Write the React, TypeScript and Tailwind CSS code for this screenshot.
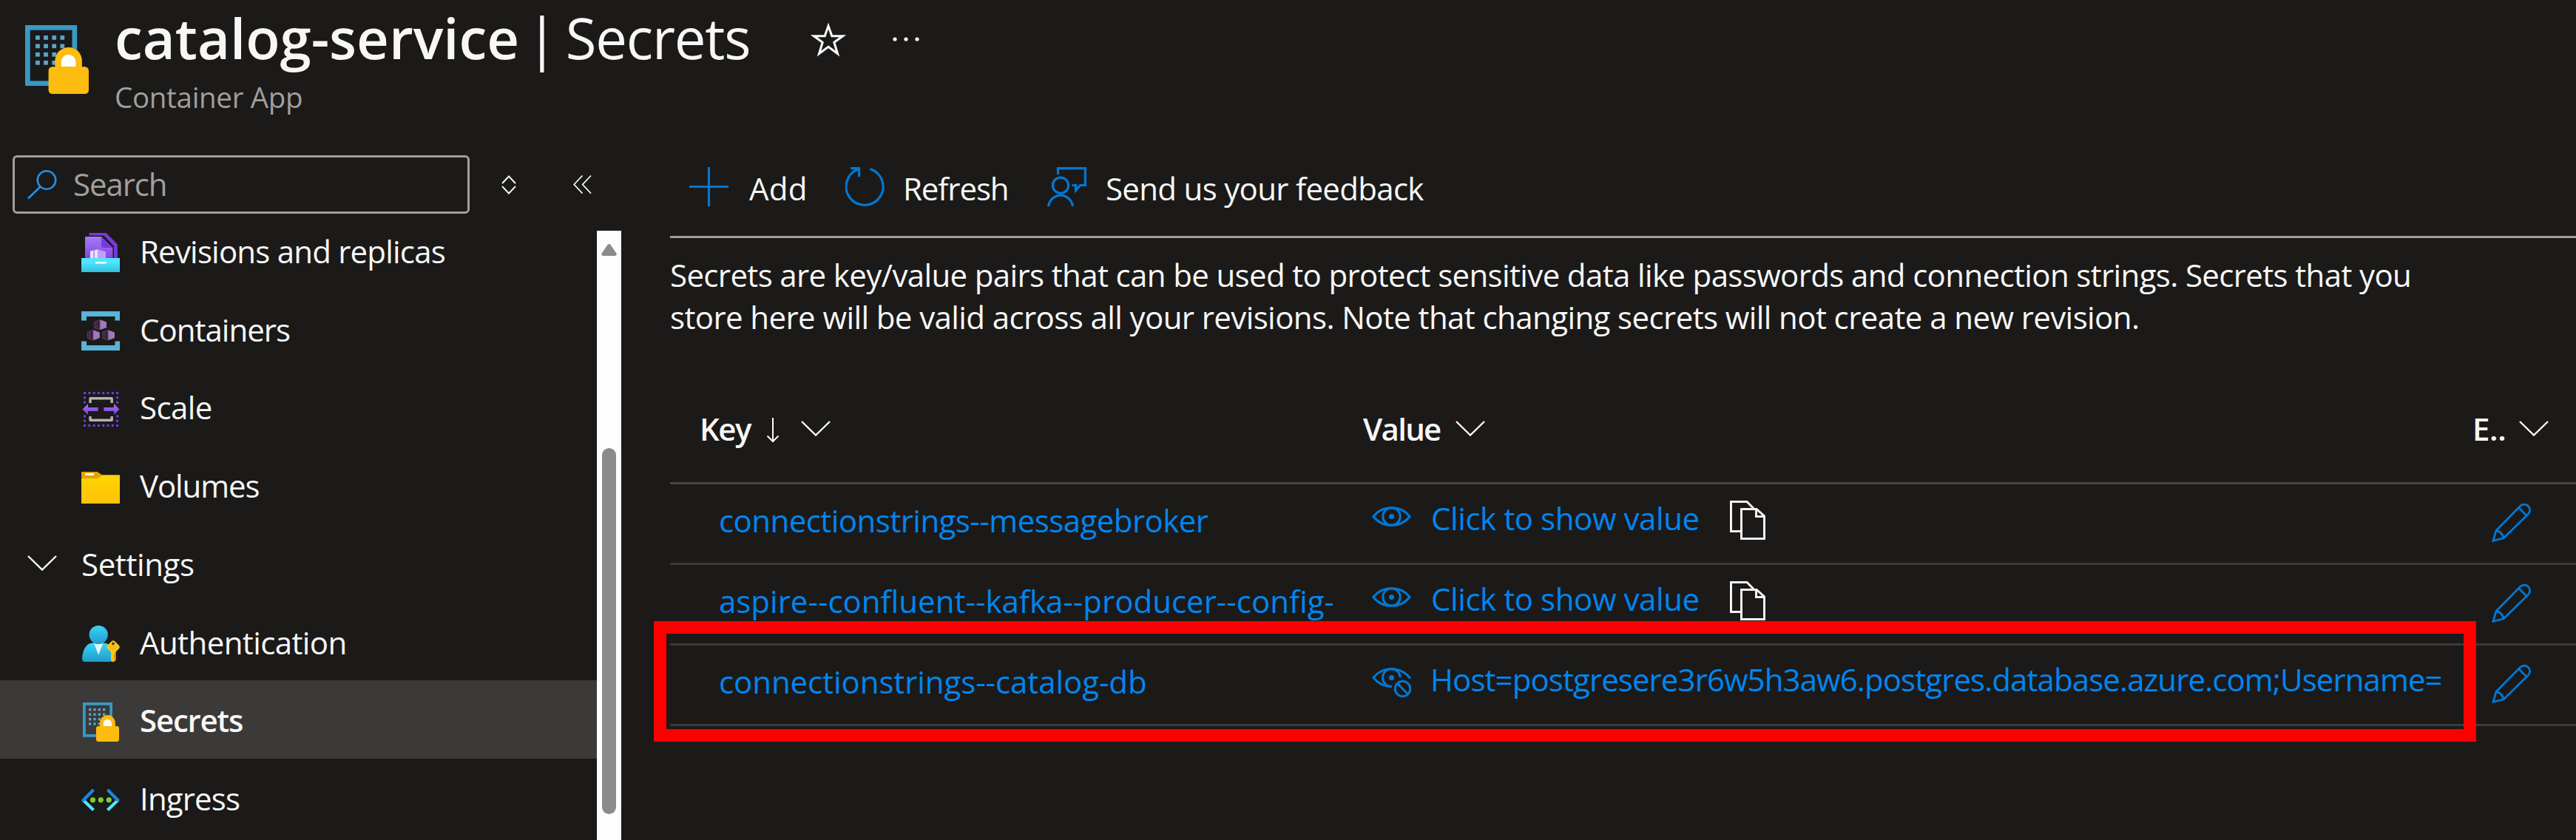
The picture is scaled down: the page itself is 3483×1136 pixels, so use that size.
import type { ReactNode } from "react";

const BLUE = "#0078d4";

function SecretsIcon({ className }: { className: string }) {
  const cols = [119, 125.3, 131.7, 138];
  const rows = [956.5, 963, 969.5, 975.8];
  return (
    <svg viewBox="112 950 49 53" className={className}>
      <rect x="113.9" y="951.9" width="36.2" height="43" fill="none" stroke="#3999c6" strokeWidth="3.8" />
      {rows.map((y) => cols.map((x) => <rect key={`${x}-${y}`} x={x + 1} y={y + 1.5} width="3.3" height="3.3" fill="#5ba3c8" />))}
      <path d="M135 984v-6.500a10.400 10.400 0 0 1 20.800 0v6.500z" fill="#fcbc10" />
      <path d="M139.800 982v-3.500a5.600 5.800 0 0 1 11.200 0v3.500z" fill="#fff" />
      <rect x="130" y="982" width="31" height="21" rx="3" fill="#fcbc10" />
    </svg>
  );
}

function RevisionsIcon() {
  return (
    <svg viewBox="0 0 52 53" className="h-[53px] w-[52px]">
      <defs>
        <linearGradient id="doc" x1="0" y1="0" x2="0" y2="1">
          <stop offset="0" stopColor="#a67af4" />
          <stop offset="1" stopColor="#8348e4" />
        </linearGradient>
        <linearGradient id="tray" x1="0" y1="0" x2="0" y2="1">
          <stop offset="0.3" stopColor="#50e6ff" />
          <stop offset="1" stopColor="#32bedd" />
        </linearGradient>
      </defs>
      <path d="M10.500 0H33.500L48.800 15.500V34H44V18L30.500 3.500H10.500Z" fill="#773adc" />
      <path d="M5 5H27L42.500 20V34H5Z" fill="url(#doc)" />
      <path d="M27 5L42.500 20H30.500Q27 20 27 17Z" fill="#773adc" />
      <path d="M22 22L33 25.500V34H22Z" fill="#bf9ff6" />
      <path d="M12 24.500L16.500 23.500V34H12ZM17.500 23.200L22 22.200V34H17.500Z" fill="#e9e2f6" />
      <rect y="34" width="52" height="19" fill="url(#tray)" />
      <rect x="19" y="39" width="15" height="2.600" rx="0.500" fill="#fff" />
    </svg>
  );
}

function Crate({ x, y }: { x: number; y: number }) {
  return (
    <g transform={`translate(${x} ${y})`}>
      <path d="M8.300 0L17 3.200V10.800L8.300 14Z" fill="#a078b8" />
      <path d="M7.300 0.500V13.500M4.600 1.500V12.500L0.700 11V3L4.600 1.800M2.700 2.800V11.500M4.600 1.500L7.300 0.600M4.600 12.500L7.300 13.400" fill="none" stroke="#693a7c" strokeWidth="1" />
    </g>
  );
}

function ContainersIcon() {
  return (
    <svg viewBox="0 0 52 53" className="h-[53px] w-[52px]">
      <path d="M0 0H52V12.500H45.500V7H7V12.500H0ZM0 40.500H7V46H45.500V40.500H52V53H0Z" fill="#59b4d9" />
      <Crate x={17} y={11.300} />
      <Crate x={7.800} y={25.300} />
      <Crate x={28} y={25.300} />
    </svg>
  );
}

function ScaleIcon() {
  const steps = [0, 1, 2, 3, 4, 5, 6, 7];
  return (
    <svg viewBox="0 0 52 53" className="h-[53px] w-[52px]">
      <defs>
        <linearGradient id="arrow" x1="0" y1="0" x2="0" y2="1">
          <stop offset="0" stopColor="#a67af4" />
          <stop offset="1" stopColor="#773adc" />
        </linearGradient>
      </defs>
      <g fill="#773adc">
        {steps.map((i) => (
          <g key={i}>
            <rect x={3 + i * 6.300} y="3" width="3" height="3" />
            <rect x={3 + i * 6.300} y="47" width="3" height="3" />
            {i !== 3 && i !== 4 && <rect x="3" y={3 + i * 6.280} width="3" height="3" />}
            {i !== 3 && i !== 4 && <rect x="47.100" y={3 + i * 6.280} width="3" height="3" />}
          </g>
        ))}
      </g>
      <path d="M12 18V12Q12 11.800 12.200 11.800H41Q41.200 11.800 41.200 12V18M12 36V41Q12 41.200 12.200 41.200H41Q41.200 41.200 41.200 41V36" fill="none" stroke="#b3b2b0" strokeWidth="3.500" />
      <path d="M1.500 26.500L9 19V24H22.500V29H9V34ZM51.500 26.500L44 19V24H30.500V29H44V34Z" fill="url(#arrow)" />
    </svg>
  );
}

function VolumesIcon() {
  return (
    <svg viewBox="0 0 52 43" className="h-[43px] w-[52px]">
      <defs>
        <linearGradient id="folder" x1="0" y1="0" x2="0" y2="1">
          <stop offset="0" stopColor="#ffd400" />
          <stop offset="1" stopColor="#ffc20a" />
        </linearGradient>
      </defs>
      <path d="M0 0H21.500L28 4.300H52V12H0Z" fill="#dfa500" />
      <path d="M0 9.300H21.500L28 4.800H52V43H0Z" fill="url(#folder)" />
      <rect x="5" y="2" width="12" height="2.800" fill="#fff" />
    </svg>
  );
}

function AuthenticationIcon() {
  return (
    <svg viewBox="0 0 52 53" className="h-[53px] w-[52px]">
      <defs>
        <linearGradient id="person" x1="0" y1="0" x2="0" y2="1">
          <stop offset="0" stopColor="#3ad4f5" />
          <stop offset="1" stopColor="#1e9bcb" />
        </linearGradient>
      </defs>
      <path d="M1 46C2 34 7 26 15 25.500H31C39 26 43 34 44 46Q44 51 40 51H5Q1 51 1 46Z" fill="url(#person)" />
      <path d="M16.800 25.500H29.500L23.200 41.500Z" fill="#e3f6fb" />
      <circle cx="23.200" cy="14.500" r="12.600" fill="url(#person)" />
      <path d="M41 23Q43 21.300 45 23L51 29Q52.500 31 51 33L46.500 37.500V49L43 51.500L40 49V37.500L35 33Q33.500 31 35 29Z" fill="#fcc419" />
      <path d="M46.500 40.500H44V48.500H46.500" fill="#e69a00" />
      <path d="M38.500 31H47.500M38.500 33.500H47.500" stroke="#f0a90a" strokeWidth="1.200" />
      <circle cx="43" cy="26.500" r="1.900" fill="#5a3a10" />
    </svg>
  );
}

function IngressIcon() {
  return (
    <svg viewBox="0 0 52 32" className="h-8 w-[52px]">
      <g fill="none" strokeWidth="4.200">
        <path d="M16.500 29.500L2 15.500M35.500 29.500L50 15.500" stroke="#50e6ff" />
        <path d="M16.500 2L1.800 17M35.500 2L50.200 17" stroke="#1a86e4" />
      </g>
      <g fill="#80cb30">
        <circle cx="15.500" cy="15.800" r="3.600" />
        <circle cx="26.300" cy="15.800" r="3.600" />
        <circle cx="37.300" cy="15.800" r="3.600" />
      </g>
    </svg>
  );
}

function Chevron({ className }: { className?: string }) {
  return (
    <svg viewBox="0 0 40 21" className={`h-[21px] w-10 shrink-0 ${className ?? ""}`}>
      <path d="M1 1L20 19.500L39 1" fill="none" stroke="#faf9f8" strokeWidth="2.400" />
    </svg>
  );
}

function EyeIcon() {
  return (
    <svg viewBox="0 0 53 27" className="mt-[30px] h-[27px] w-[53px] shrink-0">
      <g fill="none" stroke={BLUE} strokeWidth="3">
        <path d="M2 13.500C14 -2.300 39 -2.300 51 13.500C39 29.300 14 29.300 2 13.500Z" />
        <circle cx="26.500" cy="13.500" r="11.700" />
      </g>
      <circle cx="26.500" cy="13.500" r="3.500" fill={BLUE} />
    </svg>
  );
}

function EyeOffIcon() {
  return (
    <svg viewBox="0 0 54 41" className="mt-[30px] -mr-px h-[41px] w-[54px] shrink-0">
      <g fill="none" stroke={BLUE} strokeWidth="3">
        <path d="M27 25.400C17 25.500 8 21 2 13.500C14 -2.300 39 -2.300 52 14.500" />
        <path d="M27 25.400A11.900 11.900 0 1 1 38.300 13.200" />
        <circle cx="41.500" cy="28.500" r="10.300" />
        <path d="M34.500 21.500L48.500 35.500" />
      </g>
      <circle cx="26.500" cy="13.500" r="3.500" fill={BLUE} />
    </svg>
  );
}

function CopyIcon() {
  return (
    <svg viewBox="0 0 48 53" className="mt-[22px] ml-[41px] h-[53px] w-12 shrink-0">
      <g fill="none" stroke="#f3f2f1" strokeWidth="3">
        <path d="M15 41.500H1.500V1.500H23L32 10.500" />
        <path d="M15.500 11.500H36L46.500 21V51.500H15.500Z" />
        <path d="M35.500 11.500V21.500H46.500" />
      </g>
    </svg>
  );
}

function PencilIcon() {
  return (
    <svg viewBox="0 0 54 53" className="mt-[25px] ml-7 h-[53px] w-[54px]">
      <g fill="none" stroke={BLUE} strokeWidth="2.800">
        <path d="M2 51.300L6 37.500L38.500 4.500A7.400 7.400 0 0 1 49.500 15L16.200 47.800Z" />
        <path d="M36.500 6.500L47 17M6 37.500Q14 39 16.200 47.800" />
      </g>
    </svg>
  );
}

function NavItem({ icon, label, tracking, selected }: { icon: ReactNode; label: string; tracking: string; selected?: boolean }) {
  return (
    <div className={`flex h-[105.75px] shrink-0 items-center pl-[110px] ${selected ? "bg-[#3b3a39] font-semibold" : ""}`}>
      <span className="mt-[7px] flex w-[79px]">{icon}</span>
      <span className={`mt-[2px] ${tracking}`}>{label}</span>
    </div>
  );
}

function SecretRow({ name, tracking, children, highlight }: { name: string; tracking: string; children: ReactNode; highlight?: boolean }) {
  return (
    <div className="relative grid h-[109px] grid-cols-[937px_1498px_1fr] border-b-[3px] border-[#3b3a39]">
      <div className={`ml-[66px] h-[97px] w-[830px] overflow-hidden leading-[97px] whitespace-nowrap text-[#0086f0] ${tracking}`}>{name}</div>
      <div className="flex items-start overflow-hidden pl-3 whitespace-nowrap text-[#0086f0]">{children}</div>
      <PencilIcon />
      {highlight && <div className="absolute -top-[33px] -left-[22px] h-[163px] w-[2464px] border-[17px] border-[#ff0000]" />}
    </div>
  );
}

export default function App() {
  return (
    <div className="flex h-[1136px] w-[3483px] flex-col overflow-hidden bg-[#1b1a19] font-['Open_Sans',sans-serif] text-[42px] text-[#f8f7f6]">
      <header className="flex h-[190px] shrink-0 pl-[34px]">
        <SecretsIcon className="mt-[34px] h-[93px] w-[86px]" />
        <div className="ml-[35px]">
          <div className="flex items-start text-[76px] leading-[101px] whitespace-nowrap">
            <h1 className="font-semibold">catalog-service</h1>
            <span className="ml-[10px]">|</span>
            <span className="ml-[11px] tracking-[-1.2px]">Secrets</span>
            <svg viewBox="0 0 48 48" className="mt-[30px] ml-[82px] h-12 w-12">
              <path d="M24 5L28.800 18.800H43.500L31.800 27.300L36.500 42.500L24 33.300L11.500 42.500L16.200 27.300L4.500 18.800H19.200Z" fill="none" stroke="#faf9f8" strokeWidth="3" />
            </svg>
            <svg viewBox="0 0 36 6" className="mt-[50px] ml-[63px] h-1.5 w-9">
              <g fill="#faf9f8">
                <circle cx="3" cy="3" r="2.600" />
                <circle cx="18" cy="3" r="2.600" />
                <circle cx="33" cy="3" r="2.600" />
              </g>
            </svg>
          </div>
          <div className="mt-[3px] text-[38.5px] leading-[54px] tracking-[-0.3px] text-[#a19f9d]">Container App</div>
        </div>
      </header>

      <div className="flex min-h-0 flex-1">
        <aside className="flex w-[840px] shrink-0 flex-col">
          <div className="mt-5 flex shrink-0 items-center">
            <div className="ml-[17px] flex h-[79px] w-[618px] items-center rounded-md border-[3px] border-[#a19f9d] pl-[17px]">
              <svg viewBox="0 0 40 40" className="h-10 w-10">
                <g fill="none" stroke="#2094ee" strokeWidth="2.600">
                  <circle cx="26" cy="13.500" r="12.200" />
                  <path d="M17.500 22.500L1 38.500" />
                </g>
              </svg>
              <span className="mb-[3px] ml-[22px] tracking-[-1.1px] text-[#a19f9d]">Search</span>
            </div>
            <svg viewBox="0 0 20 26" className="ml-[43px] h-[26px] w-5">
              <path d="M1 11L10 1.500L19 11M1 15L10 24.500L19 15" fill="none" stroke="#faf9f8" strokeWidth="1.900" />
            </svg>
            <svg viewBox="0 0 25 25" className="ml-[77px] h-[25px] w-[25px]">
              <path d="M12.500 0.500L1.200 12.500L12.500 24.500M24 0.500L12.700 12.500L24 24.500" fill="none" stroke="#faf9f8" strokeWidth="1.700" />
            </svg>
          </div>

          <div className="mt-[23px] flex min-h-0 flex-1 overflow-hidden">
            <nav className="-mt-[26.5px] flex w-[807px] flex-col">
              <NavItem icon={<RevisionsIcon />} label="Revisions and replicas" tracking="tracking-[-0.8px]" />
              <NavItem icon={<ContainersIcon />} label="Containers" tracking="tracking-[-1px]" />
              <NavItem icon={<ScaleIcon />} label="Scale" tracking="tracking-[-0.6px]" />
              <NavItem icon={<VolumesIcon />} label="Volumes" tracking="tracking-[-1.1px]" />
              <div className="flex h-[105.75px] shrink-0 items-center pl-[37px]">
                <Chevron />
                <span className="mt-[2px] ml-[33px] tracking-[-0.4px]">Settings</span>
              </div>
              <NavItem icon={<AuthenticationIcon />} label="Authentication" tracking="tracking-[-0.6px]" />
              <NavItem icon={<SecretsIcon className="ml-[2px] h-[53px] w-[49px]" />} label="Secrets" tracking="tracking-[-1.2px]" selected />
              <NavItem icon={<IngressIcon />} label="Ingress" tracking="tracking-[-0.85px]" />
            </nav>
            <div className="flex w-[33px] flex-col items-center bg-[#fdfdfd]">
              <svg viewBox="0 0 21 16" className="mt-[18px] h-4 w-[21px] shrink-0">
                <path d="M8.500 1Q10.500 -0.800 12.500 1L20.300 12.500Q21.500 16 18.500 16H2.500Q-0.500 16 0.700 12.500Z" fill="#8b8b8b" />
              </svg>
              <div className="mt-[260px] h-[495px] w-[19px] shrink-0 rounded-full bg-[#8b8b8b]" />
            </div>
          </div>
        </aside>

        <main className="ml-[66px] flex flex-1 flex-col">
          <div className="flex h-[132px] shrink-0 items-center border-b-[3px] border-[#a19f9d] whitespace-nowrap">
            <svg viewBox="0 0 53 53" className="mb-1 ml-[26px] h-[53px] w-[53px]">
              <path d="M26.500 0V53M0 26.500H53" stroke={BLUE} strokeWidth="3.200" />
            </svg>
            <span className="ml-[28px] w-[77px] tracking-[0.3px]">Add</span>
            <svg viewBox="0 0 53 53" className="mb-1 ml-[53px] h-[53px] w-[53px]">
              <path d="M33.500 2.500A25 25 0 1 1 18.500 2.500M7 1.600H18.600V13" fill="none" stroke={BLUE} strokeWidth="3.200" />
            </svg>
            <span className="ml-[25px] w-[143px] tracking-[-1.1px]">Refresh</span>
            <svg viewBox="15 11 54 53" className="mb-1 ml-[51px] h-[53px] w-[54px]">
              <g fill="none" stroke={BLUE} strokeWidth="3.200">
                <path d="M30.500 21V12.600H67.400V35.500H60.500L54.500 42.500V35.500H49.500" />
                <circle cx="34" cy="35.700" r="10.600" />
                <path d="M17.500 64A16.700 17.500 0 0 1 50.500 64" />
              </g>
            </svg>
            <span className="ml-[26px] tracking-[-0.68px]">Send us your feedback</span>
          </div>

          <p className="mt-[21px] shrink-0 leading-[57px] whitespace-nowrap">
            <span className="tracking-[-0.63px]">
              Secrets are key/value pairs that can be used to protect sensitive data like passwords and connection strings. Secrets that you
            </span>
            <br />
            <span className="tracking-[-0.59px]">
              store here will be valid across all your revisions. Note that changing secrets will not create a new revision.
            </span>
          </p>

          <div className="mt-[49px] grid h-[149px] shrink-0 grid-cols-[937px_1498px_1fr] items-center border-b-[3px] border-[#484644] font-semibold">
            <div className="flex items-center pl-[40px]">
              <span className="w-[72px] tracking-[-1.5px]">Key</span>
              <svg viewBox="0 0 18 34" className="mt-[5px] ml-[18px] h-[34px] w-[18px]">
                <path d="M9 0V32M1.500 24.500L9 32L16.500 24.500" fill="none" stroke="#faf9f8" strokeWidth="2" />
              </svg>
              <Chevron className="ml-[29px]" />
            </div>
            <div className="flex items-center">
              <span className="w-[125px] tracking-[-1.7px]">Value</span>
              <Chevron />
            </div>
            <div className="flex items-center">
              <span className="ml-[2px] w-[63px] tracking-[-0.4px]">E..</span>
              <Chevron />
            </div>
          </div>

          <SecretRow name="connectionstrings--messagebroker" tracking="tracking-[-0.54px]">
            <EyeIcon />
            <span className="ml-[27px] leading-[91px] tracking-[-0.42px]">Click to show value</span>
            <CopyIcon />
          </SecretRow>
          <SecretRow name="aspire--confluent--kafka--producer--config-" tracking="tracking-[0px]">
            <EyeIcon />
            <span className="ml-[27px] leading-[91px] tracking-[-0.42px]">Click to show value</span>
            <CopyIcon />
          </SecretRow>
          <SecretRow name="connectionstrings--catalog-db" tracking="tracking-[-0.08px]" highlight>
            <EyeOffIcon />
            <span className="ml-[26px] leading-[91px] tracking-[-0.91px]">Host=postgresere3r6w5h3aw6.postgres.database.azure.com;Username=</span>
          </SecretRow>
        </main>
      </div>
    </div>
  );
}
